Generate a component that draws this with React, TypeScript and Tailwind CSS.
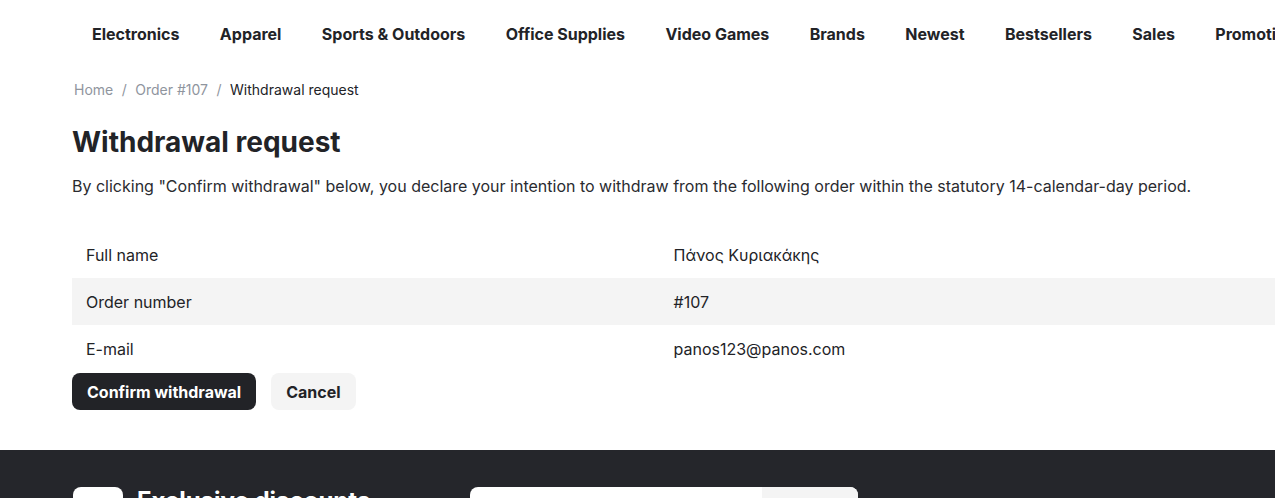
const navItems = [
  "Electronics",
  "Apparel",
  "Sports & Outdoors",
  "Office Supplies",
  "Video Games",
  "Brands",
  "Newest",
  "Bestsellers",
  "Sales",
  "Promotions",
];

const rows = [
  { label: "Full name", value: "Πάνος Κυριακάκης" },
  { label: "Order number", value: "#107" },
  { label: "E-mail", value: "panos123@panos.com" },
];

export default function App() {
  return (
    <div className="h-[498px] w-[1275px] overflow-hidden bg-white font-['Inter',sans-serif] text-[#222327]">
      <nav className="flex h-[68px] items-center gap-[40.4px] whitespace-nowrap pl-[92px] text-base font-bold">
        {navItems.map((item) => (
          <a key={item} href="#" className="shrink-0">
            {item}
          </a>
        ))}
      </nav>

      <main className="pl-[72px]">
        <div className="flex h-[44px] items-center gap-[8.5px] pl-[2px] text-sm">
          <a href="#" className="text-[#8f959e]">Home</a>
          <span className="text-[#8f959e]">/</span>
          <a href="#" className="text-[#8f959e]">Order #107</a>
          <span className="text-[#8f959e]">/</span>
          <span>Withdrawal request</span>
        </div>

        <h1 className="mt-[12px] text-[28px] font-bold leading-[36px]">Withdrawal request</h1>
        <p className="mt-[14px] text-base leading-6 text-[#2a2b30]">
          By clicking "Confirm withdrawal" below, you declare your intention to withdraw from the following order within the statutory 14-calendar-day period.
        </p>

        <table className="mt-[33px] w-[1203px] table-fixed text-base">
          <tbody>
            {rows.map((row, i) => (
              <tr key={row.label} className={i % 2 === 1 ? "h-[47px] bg-[#f4f4f4]" : "h-[47px]"}>
                <td className="px-[14px]">{row.label}</td>
                <td className="px-0">{row.value}</td>
              </tr>
            ))}
          </tbody>
        </table>

        <div className="mt-px flex gap-[15px]">
          <button className="h-[37px] rounded-lg bg-[#222327] px-[15px] text-base font-bold text-white">
            Confirm withdrawal
          </button>
          <button className="h-[37px] rounded-lg bg-[#f4f4f4] px-[15px] text-base font-bold">
            Cancel
          </button>
        </div>
      </main>

      <footer className="mt-[40px] h-[200px] bg-[#25262b] pl-[73px] pt-[37px]">
        <div className="flex items-start">
          <div className="h-[50px] w-[50px] rounded-lg bg-white" />
          <div className="ml-[14px] mt-[-2px] text-2xl font-bold text-white">Exclusive discounts</div>
          <div className="ml-[100px] flex h-[46px] w-[388px] overflow-hidden rounded-lg bg-white">
            <div className="flex-1" />
            <div className="w-[96px] bg-[#f4f4f4]" />
          </div>
        </div>
      </footer>
    </div>
  );
}
